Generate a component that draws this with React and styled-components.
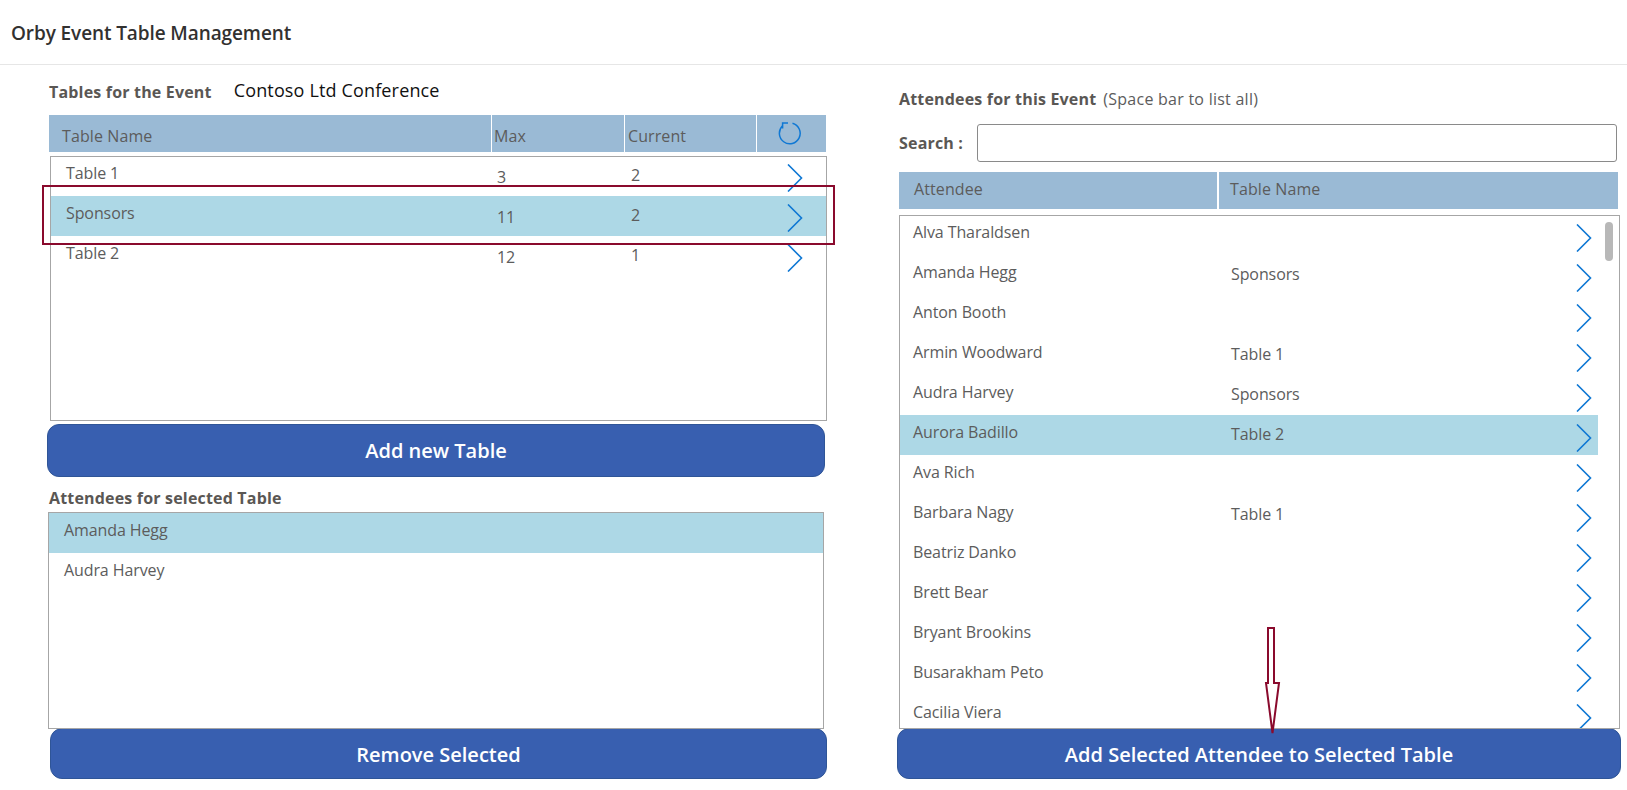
import React from "react";
import styled, { createGlobalStyle } from "styled-components";

const GlobalStyle = createGlobalStyle`
    html, body {
        margin: 0;
        padding: 0;
        background: #ffffff;
        font-family: "Open Sans", "Noto Sans", sans-serif;
        overflow: hidden;
    }
`;

const Screen = styled.div`
    position: relative;
    width: 1627px;
    height: 790px;
    overflow: hidden;
`;

const TopBar = styled.header`
    height: 65px;
    box-sizing: border-box;
    border-bottom: 1px solid #e6e6e6;
    padding: 22px 0 0 11px;
    font-size: 19px;
    line-height: 22px;
    font-weight: 600;
    letter-spacing: -0.1px;
    color: #323130;
`;

const Columns = styled.main`
    display: grid;
    grid-template-columns: 899px 728px;
`;

const LeftColumn = styled.section`
    padding: 13px 0 0 49px;
    display: flex;
    flex-direction: column;
    align-items: flex-start;
`;

const RightColumn = styled.section`
    display: flex;
    flex-direction: column;
    align-items: flex-start;
`;

const TitleRow = styled.div`
    display: flex;
    align-items: center;
    height: 28px;
    gap: 22px;
`;

const Label = styled.span`
    font-size: 16px;
    font-weight: 700;
    letter-spacing: 0.18px;
    color: #5a5754;
    white-space: nowrap;
`;

const EventName = styled.span`
    font-size: 18px;
    color: #111;
    position: relative;
    top: -2px;
    letter-spacing: 0.15px;
`;

const HeaderRow = styled.div`
    display: grid;
    grid-template-columns: ${p => p.$cols};
    width: ${p => p.$width}px;
    height: 37px;
    margin-top: ${p => p.$top}px;
    gap: ${p => p.$gap}px;
`;

const HeaderCell = styled.div`
    background: #9abad5;
    padding: ${p => p.$top}px 0 0 ${p => p.$pad}px;
    font-size: 16px;
    line-height: 31px;
    letter-spacing: 0.1px;
    color: #5c5c5c;
    display: flex;
    align-items: flex-start;
    box-sizing: border-box;
`;

const IconCell = styled(HeaderCell)`
    padding: 7px 0 0 21px;
`;

const ListBox = styled.div`
    position: relative;
    box-sizing: border-box;
    border: 1px solid #a6a6a6;
    width: ${p => p.$width}px;
    height: ${p => p.$height}px;
    margin-top: ${p => p.$top}px;
    margin-left: ${p => p.$left || 0}px;
    overflow: hidden;
    background: #fff;
`;

// galleries sit a pixel up under their border in the screenshot
const GalleryRows = styled.div`
    margin-top: -1px;
`;

const Row = styled.div`
    display: grid;
    grid-template-columns: ${p => p.$cols};
    height: 40px;
    width: ${p => (p.$width ? `${p.$width}px` : "auto")};
    background: ${p => (p.$selected ? "#add8e6" : "transparent")};
`;

const Cell = styled.div`
    font-size: 16px;
    line-height: 20px;
    letter-spacing: -0.1px;
    color: #5c5c5c;
    padding-top: ${p => p.$top}px;
    padding-left: ${p => p.$pad}px;
    white-space: nowrap;
`;

const Chevron = styled.svg`
    display: block;
    width: 16px;
    height: 28px;
    margin-top: ${p => p.$top}px;
    margin-left: ${p => p.$left}px;
    fill: none;
    stroke: #0f78d4;
    stroke-width: 1.6;
`;

const ActionButton = styled.button`
    display: block;
    box-sizing: border-box;
    width: ${p => p.$width}px;
    height: ${p => p.$height}px;
    margin-top: ${p => p.$top}px;
    margin-left: ${p => p.$left || 0}px;
    border: 1px solid #2f5597;
    border-radius: 12px;
    background: #385fb0;
    color: #fff;
    font-family: inherit;
    font-size: 20px;
    font-weight: 600;
    padding: ${p => p.$textDrop || 0}px 0 0;
`;

const SubLabel = styled.div`
    margin-top: 9px;
    height: 26px;
    line-height: 24px;
`;

const AttendeeTitle = styled.div`
    display: flex;
    align-items: center;
    gap: 7px;
    height: 24px;
    margin-top: 22px;
`;

const Hint = styled.span`
    font-size: 16px;
    letter-spacing: 0.25px;
    color: #5c5c5c;
`;

const SearchRow = styled.div`
    display: flex;
    align-items: center;
    gap: 14px;
    margin-top: 13px;
`;

const SearchInput = styled.input`
    box-sizing: border-box;
    width: 640px;
    height: 38px;
    border: 1px solid #8a8a8a;
    border-radius: 3px;
    outline: none;
    background: #fff;
`;

const ScrollThumb = styled.div`
    position: absolute;
    top: 6px;
    right: 6px;
    width: 8px;
    height: 39px;
    border-radius: 4px;
    background: #b8b8b8;
`;

const Highlight = styled.div`
    position: absolute;
    left: 42px;
    top: 185px;
    width: 793px;
    height: 60px;
    box-sizing: border-box;
    border: 2px solid #8a0a2d;
    pointer-events: none;
`;

const ArrowMark = styled.svg`
    position: absolute;
    left: 1262px;
    top: 626px;
    width: 22px;
    height: 110px;
`;

const tables = [
    { name: "Table 1", max: "3", current: "2" },
    { name: "Sponsors", max: "11", current: "2", selected: true },
    { name: "Table 2", max: "12", current: "1" },
];

const attendees = [
    ["Alva Tharaldsen", ""],
    ["Amanda Hegg", "Sponsors"],
    ["Anton Booth", ""],
    ["Armin Woodward", "Table 1"],
    ["Audra Harvey", "Sponsors"],
    ["Aurora Badillo", "Table 2", true],
    ["Ava Rich", ""],
    ["Barbara Nagy", "Table 1"],
    ["Beatriz Danko", ""],
    ["Brett Bear", ""],
    ["Bryant Brookins", ""],
    ["Busarakham Peto", ""],
    ["Cacilia Viera", ""],
];

const ChevronIcon = ({ top, left }) => (
    <Chevron $top={top} $left={left} viewBox="0 0 16 28">
        <path d="M1 0.5 L14.5 14 L1 27.5" />
    </Chevron>
);

const tableCols = "441px 134px 134px 1fr";
const attendeeCols = "331px 346px 1fr";

export default function App() {
    return (
        <Screen>
            <GlobalStyle />
            <TopBar>Orby Event Table Management</TopBar>
            <Columns>
                <LeftColumn>
                    <TitleRow>
                        <Label>Tables for the Event</Label>
                        <EventName>Contoso Ltd Conference</EventName>
                    </TitleRow>
                    <HeaderRow $cols="442px 132px 131px 1fr" $width={777} $top={9} $gap={1}>
                        <HeaderCell $top={6} $pad={13}>Table Name</HeaderCell>
                        <HeaderCell $top={6} $pad={2}>Max</HeaderCell>
                        <HeaderCell $top={6} $pad={3}>Current</HeaderCell>
                        <IconCell>
                            <svg width="24" height="24" viewBox="0 0 24 24" fill="none" stroke="#0f78d4" strokeWidth="1.5">
                                <path d="M14.5 1.3 A 10.4 10.4 0 1 1 4.6 3.8" />
                                <path d="M4.6 6.5 V1 H10" />
                            </svg>
                        </IconCell>
                    </HeaderRow>
                    <ListBox $width={777} $height={265} $top={4} $left={1}>
                        <GalleryRows>
                            {tables.map(t => (
                                <Row key={t.name} $cols={tableCols} $selected={t.selected}>
                                    <Cell $top={7} $pad={15}>{t.name}</Cell>
                                    <Cell $top={11} $pad={5}>{t.max}</Cell>
                                    <Cell $top={9} $pad={5}>{t.current}</Cell>
                                    <ChevronIcon top={8} left={27} />
                                </Row>
                            ))}
                        </GalleryRows>
                    </ListBox>
                    <ActionButton $width={778} $height={53} $top={3} $left={-2}>Add new Table</ActionButton>
                    <SubLabel><Label>Attendees for selected Table</Label></SubLabel>
                    <ListBox $width={776} $height={217} $top={0} $left={-1}>
                        <Row $cols="1fr" $selected><Cell $top={7} $pad={15}>Amanda Hegg</Cell></Row>
                        <Row $cols="1fr"><Cell $top={7} $pad={15}>Audra Harvey</Cell></Row>
                    </ListBox>
                    <ActionButton $width={777} $height={51} $top={-1} $left={1} $textDrop={2}>Remove Selected</ActionButton>
                </LeftColumn>
                <RightColumn>
                    <AttendeeTitle>
                        <Label>Attendees for this Event</Label>
                        <Hint>(Space bar to list all)</Hint>
                    </AttendeeTitle>
                    <SearchRow>
                        <Label>Search :</Label>
                        <SearchInput />
                    </SearchRow>
                    <HeaderRow $cols="318px 1fr" $width={719} $top={10} $gap={2}>
                        <HeaderCell $top={2} $pad={15}>Attendee</HeaderCell>
                        <HeaderCell $top={2} $pad={11}>Table Name</HeaderCell>
                    </HeaderRow>
                    <ListBox $width={721} $height={514} $top={6}>
                        <GalleryRows>
                            {attendees.map(([name, table, selected]) => (
                                <Row key={name} $cols={attendeeCols} $width={698} $selected={selected}>
                                    <Cell $top={7} $pad={13}>{name}</Cell>
                                    <Cell $top={9} $pad={0}>{table}</Cell>
                                    <ChevronIcon top={9} left={-1} />
                                </Row>
                            ))}
                        </GalleryRows>
                        <ScrollThumb />
                    </ListBox>
                    <ActionButton $width={724} $height={51} $top={-1} $left={-2} $textDrop={2}>Add Selected Attendee to Selected Table</ActionButton>
                </RightColumn>
            </Columns>
            <Highlight />
            <ArrowMark viewBox="0 0 22 110">
                <path d="M6 2 H12 V57 H17 L10.5 107 L4 57 H6 Z" fill="#fff" stroke="#8a0a2d" strokeWidth="2" />
            </ArrowMark>
        </Screen>
    );
}
